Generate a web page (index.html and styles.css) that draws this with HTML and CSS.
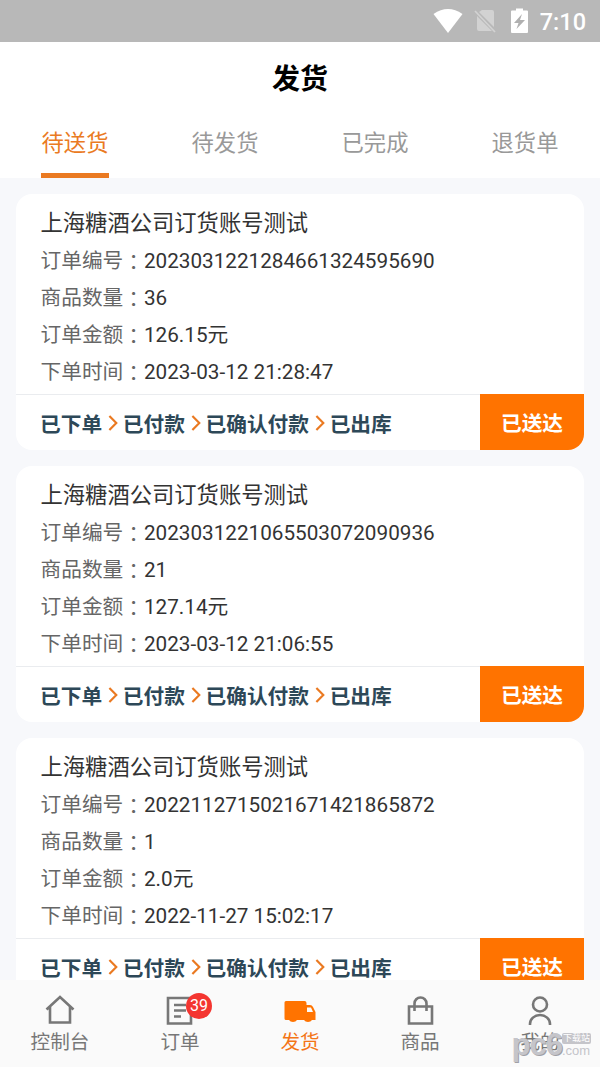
FILE: index.html
```
<!DOCTYPE html>
<html lang="zh-CN">
    <head>
        <meta charset="utf-8" />
        <meta name="viewport" content="width=device-width" />
        <title>发货</title>
        <link rel="stylesheet" href="styles.css">
    </head>
    <body>
        <div class="status-bar">
            <svg class="wifi" width="30" height="24" viewBox="0 0 30 24"><path d="M.5 5Q15-5 29.500 5L15 24z" fill="#fff"/></svg>
            <svg class="no-sim" width="22" height="24" viewBox="0 0 22 24"><path d="M8 1h10q2 0 2 2v15L5 3zM3 7l15 15H5q-2 0-2-2z" fill="#d2d2d2"/><path d="M1 2l20 21" stroke="#d2d2d2" stroke-width="1.700"/></svg>
            <svg class="battery" width="17" height="26" viewBox="0 0 17 26"><path d="M1 2.500h4V.500h7v2h4q1 0 1 1V24q0 1-1 1H1q-1 0-1-1V3.500q0-1 1-1z" fill="#fff"/><path d="M11 6L3 15h4.500L5.500 21 14 12H9z" fill="#b0b0b0"/></svg>
            <span class="time">7:10</span>
        </div>
        <header class="title">发货</header>
        <nav class="tabs">
            <div class="tab active"><span>待送货</span></div>
            <div class="tab"><span>待发货</span></div>
            <div class="tab"><span>已完成</span></div>
            <div class="tab"><span>退货单</span></div>
        </nav>

        <main class="orders">
            <div class="order">
                <div class="info">
                    <h2>上海糖酒公司订货账号测试</h2>
                    <p><label>订单编号<i lang="zh-TW">：</i></label>2023031221284661324595690</p>
                    <p><label>商品数量<i lang="zh-TW">：</i></label>36</p>
                    <p><label>订单金额<i lang="zh-TW">：</i></label>126.15元</p>
                    <p><label>下单时间<i lang="zh-TW">：</i></label>2023-03-12 21:28:47</p>
                </div>
                <div class="bottom">
                    <div class="steps">
                        <span>已下单</span><svg viewBox="0 0 21 20"><path d="M7.500 3l7 7-7 7"/></svg><span>已付款</span><svg viewBox="0 0 21 20"><path d="M7.500 3l7 7-7 7"/></svg><span>已确认付款</span><svg viewBox="0 0 21 20"><path d="M7.500 3l7 7-7 7"/></svg><span>已出库</span>
                    </div>
                    <div class="button">已送达</div>
                </div>
            </div>
            <div class="order">
                <div class="info">
                    <h2>上海糖酒公司订货账号测试</h2>
                    <p><label>订单编号<i lang="zh-TW">：</i></label>2023031221065503072090936</p>
                    <p><label>商品数量<i lang="zh-TW">：</i></label>21</p>
                    <p><label>订单金额<i lang="zh-TW">：</i></label>127.14元</p>
                    <p><label>下单时间<i lang="zh-TW">：</i></label>2023-03-12 21:06:55</p>
                </div>
                <div class="bottom">
                    <div class="steps">
                        <span>已下单</span><svg viewBox="0 0 21 20"><path d="M7.500 3l7 7-7 7"/></svg><span>已付款</span><svg viewBox="0 0 21 20"><path d="M7.500 3l7 7-7 7"/></svg><span>已确认付款</span><svg viewBox="0 0 21 20"><path d="M7.500 3l7 7-7 7"/></svg><span>已出库</span>
                    </div>
                    <div class="button">已送达</div>
                </div>
            </div>
            <div class="order">
                <div class="info">
                    <h2>上海糖酒公司订货账号测试</h2>
                    <p><label>订单编号<i lang="zh-TW">：</i></label>2022112715021671421865872</p>
                    <p><label>商品数量<i lang="zh-TW">：</i></label>1</p>
                    <p><label>订单金额<i lang="zh-TW">：</i></label>2.0元</p>
                    <p><label>下单时间<i lang="zh-TW">：</i></label>2022-11-27 15:02:17</p>
                </div>
                <div class="bottom">
                    <div class="steps">
                        <span>已下单</span><svg viewBox="0 0 21 20"><path d="M7.500 3l7 7-7 7"/></svg><span>已付款</span><svg viewBox="0 0 21 20"><path d="M7.500 3l7 7-7 7"/></svg><span>已确认付款</span><svg viewBox="0 0 21 20"><path d="M7.500 3l7 7-7 7"/></svg><span>已出库</span>
                    </div>
                    <div class="button">已送达</div>
                </div>
            </div>
        </main>

        <footer class="tabbar">
            <div class="item">
                <svg viewBox="0 0 32 32"><path d="M2.500 15.500L16 3l13.500 12.500M6 13v15.500h20V13"/></svg>
                <span>控制台</span>
            </div>
            <div class="item">
                <svg viewBox="0 0 32 32"><path d="M4 4h23v25.500H4zM10 11h12M10 16.500h12M10 22.500h7"/></svg>
                <span>订单</span>
                <b class="badge">39</b>
            </div>
            <div class="item active">
                <svg viewBox="0 0 32 32"><path d="M2 7h18.500q2 0 2 2v2H26q2 0 3 2l2.500 5v8H28a4.500 3.500 0 0 1-8 0h-7a4.500 3.500 0 0 1-8 0H2q-1.500 0-1.500-1.500v-16Q.5 7 2 7zM23 13.500V18h6l-2-4.500z" fill-rule="evenodd"/></svg>
                <span>发货</span>
            </div>
            <div class="item">
                <svg viewBox="0 0 32 32"><path d="M5 12.500h23v17H5zM10.500 17V9.500a6 6 0 0 1 12 0V17"/></svg>
                <span>商品</span>
            </div>
            <div class="item">
                <svg viewBox="0 0 32 32"><circle cx="16" cy="10.500" r="7"/><path d="M6 31v-1a10 9 0 0 1 20 0v1"/></svg>
                <span>我的</span>
            </div>
        </footer>

        <div class="watermark">
            <span class="logo">pc6</span>
            <div class="site"><span class="cn">下载站</span><span class="com">.com</span></div>
        </div>
    </body>
</html>
```
FILE: styles.css
```
html, body { margin: 0; padding: 0; width: 100%; height: 100%; overflow: hidden }
body {
    display: flex;
    flex-direction: column;
    position: relative;
    background: #f7f8fb;
    font-family: Roboto, "Noto Sans CJK SC", sans-serif;
}

.status-bar {
    flex: none;
    display: flex;
    align-items: center;
    justify-content: flex-end;
    box-sizing: border-box;
    height: 42px;
    padding-right: 14px;
    background: #b8b8b8;
    color: #fff;
}
.wifi { margin-right: 1px; }
.no-sim { margin-left: 10px; }
.battery { margin-left: 15px; }
.time {
    margin-left: 12px;
    padding-top: 2px;
    font-size: 23.5px;
    font-weight: 500;
}

.title {
    flex: none;
    height: 72px;
    line-height: 75px;
    background: #fff;
    text-align: center;
    font-size: 28px;
    font-weight: bold;
    color: #000;
}

.tabs {
    flex: none;
    display: flex;
    height: 64px;
    background: #fff;
}
.tab {
    flex: 1;
    text-align: center;
    font-size: 22.3px;
    line-height: 58px;
    color: #999;
}
.tab span {
    display: inline-block;
    box-sizing: border-box;
    width: 68px;
    height: 64px;
}
.tab.active { color: #ea7a22; }
.tab.active span { border-bottom: 5px solid #ea7a22; }

.orders {
    flex: 1;
    min-height: 0;
    overflow: hidden;
    padding: 16px 16px 0;
}
.order {
    height: 256px;
    margin-bottom: 16px;
    border-radius: 16px;
    background: #fff;
    overflow: hidden;
}
.info {
    box-sizing: border-box;
    height: 200px;
    padding: 9px 24.5px 0;
}
.info h2 {
    margin: 0;
    font-size: 22.3px;
    font-weight: normal;
    line-height: 40px;
    color: #333;
}
.info p {
    display: flex;
    align-items: center;
    height: 36.800px;
    margin: 0;
    font-size: 20.7px;
    line-height: 36px;
    color: #333;
}
.info label { color: #666; }
.info i {
    font-style: normal;
    line-height: 1;
    vertical-align: -2px;
}

.bottom {
    display: flex;
    height: 56px;
}
.steps {
    flex: 1;
    display: flex;
    align-items: center;
    box-sizing: border-box;
    border-top: 1px solid #eaecef;
    padding-left: 24px;
    font-size: 20.7px;
    font-weight: bold;
    color: #2d4858;
}
.steps svg {
    width: 20.7px;
    height: 20px;
    fill: none;
    stroke: #ea7a22;
    stroke-width: 2.200;
}
.button {
    width: 104px;
    line-height: 60px;
    background: #ff7300;
    color: #fff;
    text-align: center;
    font-size: 20.7px;
    font-weight: bold;
}

.tabbar {
    flex: none;
    display: flex;
    height: 87px;
    background: #fafafa;
}
.item {
    flex: 1;
    position: relative;
    display: flex;
    flex-direction: column;
    align-items: center;
    padding-top: 14px;
    font-size: 19.6px;
    line-height: 34px;
    color: #777;
}
.item svg {
    width: 32px;
    height: 32px;
    fill: none;
    stroke: #777;
    stroke-width: 2.600;
}
.item.active { color: #f47516; }
.item.active svg { fill: #ff7300; stroke: none; }
.badge {
    position: absolute;
    top: 13px;
    left: 66px;
    width: 26px;
    height: 26px;
    border-radius: 50%;
    background: #f43530;
    color: #fff;
    text-align: center;
    font-size: 16px;
    font-weight: normal;
    line-height: 26px;
}

.watermark {
    position: absolute;
    right: 9px;
    bottom: 5px;
    display: flex;
    align-items: center;
    color: #c5c5ca;
    font-family: "Liberation Sans", "Noto Sans CJK SC", sans-serif;
    text-shadow: 1px 1px 0 #a0a0a6;
}
.logo {
    font-size: 31px;
    line-height: 34px;
    font-weight: bold;
    letter-spacing: -1px;
}
.site {
    display: flex;
    flex-direction: column;
}
.cn {
    padding: 0 1px;
    border-radius: 2px;
    background: #c5c5ca;
    color: #fff;
    font-size: 9px;
    line-height: 11px;
    text-shadow: none;
}
.com {
    font-size: 13px;
    line-height: 13px;
    text-shadow: none;
}
```
